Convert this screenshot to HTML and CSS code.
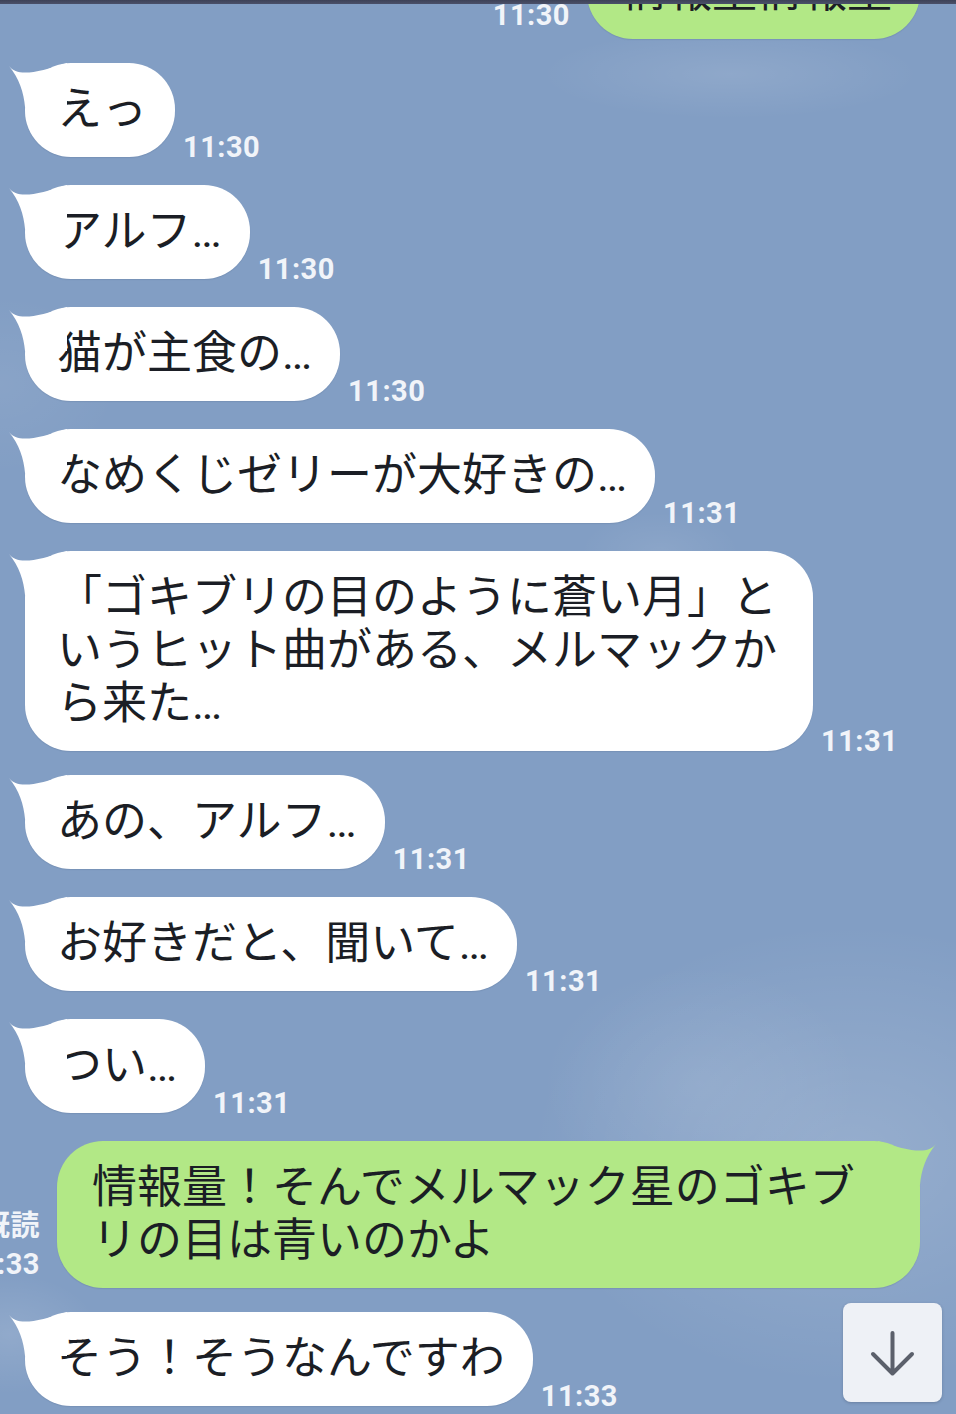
FILE: index.html
```html
<!DOCTYPE html>
<html lang="ja">
<head>
<meta charset="utf-8">
<title>トーク</title>
<link rel="stylesheet" href="styles.css">
</head>
<body>
<div class="phone">
  <div class="topbar"></div>
  <div class="chat">
    <ul class="messages">
      <li class="row sent">
        <div class="meta"><span>既読</span><span>11:30</span></div>
        <div class="bubble"><svg class="tail" viewBox="0 0 60 44" width="60" height="44"><path d="M2 3 C10 14 30 10 60 0 L60 44 L18 44 C17 30 12 15 2 3 Z"/></svg>情報量情報量</div>
      </li>
      <li class="row recv gap-sm">
        <div class="bubble"><svg class="tail" viewBox="0 0 60 44" width="60" height="44"><path d="M2 3 C10 14 30 10 60 0 L60 44 L18 44 C17 30 12 15 2 3 Z"/></svg>えっ</div>
        <span class="time">11:30</span>
      </li>
      <li class="row recv">
        <div class="bubble"><svg class="tail" viewBox="0 0 60 44" width="60" height="44"><path d="M2 3 C10 14 30 10 60 0 L60 44 L18 44 C17 30 12 15 2 3 Z"/></svg>アルフ…</div>
        <span class="time">11:30</span>
      </li>
      <li class="row recv">
        <div class="bubble"><svg class="tail" viewBox="0 0 60 44" width="60" height="44"><path d="M2 3 C10 14 30 10 60 0 L60 44 L18 44 C17 30 12 15 2 3 Z"/></svg>猫が主食の…</div>
        <span class="time">11:30</span>
      </li>
      <li class="row recv">
        <div class="bubble"><svg class="tail" viewBox="0 0 60 44" width="60" height="44"><path d="M2 3 C10 14 30 10 60 0 L60 44 L18 44 C17 30 12 15 2 3 Z"/></svg>なめくじゼリーが大好きの…</div>
        <span class="time">11:31</span>
      </li>
      <li class="row recv">
        <div class="bubble"><svg class="tail" viewBox="0 0 60 44" width="60" height="44"><path d="M2 3 C10 14 30 10 60 0 L60 44 L18 44 C17 30 12 15 2 3 Z"/></svg>「ゴキブリの目のように蒼い月」というヒット曲がある、メルマックから来た…</div>
        <span class="time">11:31</span>
      </li>
      <li class="row recv gap-sm">
        <div class="bubble"><svg class="tail" viewBox="0 0 60 44" width="60" height="44"><path d="M2 3 C10 14 30 10 60 0 L60 44 L18 44 C17 30 12 15 2 3 Z"/></svg>あの、アルフ…</div>
        <span class="time">11:31</span>
      </li>
      <li class="row recv">
        <div class="bubble"><svg class="tail" viewBox="0 0 60 44" width="60" height="44"><path d="M2 3 C10 14 30 10 60 0 L60 44 L18 44 C17 30 12 15 2 3 Z"/></svg>お好きだと、聞いて…</div>
        <span class="time">11:31</span>
      </li>
      <li class="row recv">
        <div class="bubble"><svg class="tail" viewBox="0 0 60 44" width="60" height="44"><path d="M2 3 C10 14 30 10 60 0 L60 44 L18 44 C17 30 12 15 2 3 Z"/></svg>つい…</div>
        <span class="time">11:31</span>
      </li>
      <li class="row sent">
        <div class="meta"><span>既読</span><span>11:33</span></div>
        <div class="bubble"><svg class="tail" viewBox="0 0 60 44" width="60" height="44"><path d="M2 3 C10 14 30 10 60 0 L60 44 L18 44 C17 30 12 15 2 3 Z"/></svg>情報量！そんでメルマック星のゴキブリの目は青いのかよ</div>
      </li>
      <li class="row recv gap-sm">
        <div class="bubble"><svg class="tail" viewBox="0 0 60 44" width="60" height="44"><path d="M2 3 C10 14 30 10 60 0 L60 44 L18 44 C17 30 12 15 2 3 Z"/></svg>そう！そうなんですわ</div>
        <span class="time">11:33</span>
      </li>
    </ul>
    <button class="scroll-down" type="button" aria-label="最新のメッセージへ">
      <svg viewBox="0 0 99 99" width="99" height="99"><path d="M49.5 30 V70 M30 51 L49.5 70.5 L69 51" fill="none" stroke="#5b606b" stroke-width="4" stroke-linecap="round" stroke-linejoin="round"/></svg>
    </button>
  </div>
</div>
</body>
</html>
```

FILE: styles.css
```css
html, body {
  margin: 0;
  padding: 0;
}

body {
  width: 956px;
  height: 1414px;
  overflow: hidden;
  background: #829ec4;
  font-family: "Roboto", "Noto Sans CJK JP", sans-serif;
}

.phone {
  display: flex;
  flex-direction: column;
  height: 1414px;
}

.topbar {
  height: 4px;
  flex-shrink: 0;
  background: linear-gradient(#3d4257, #4a5069);
}

.chat {
  position: relative;
  flex: 1;
  overflow: hidden;
  background:
    radial-gradient(ellipse 190px 45px at 730px 70px, rgba(255,255,255,0.10), rgba(255,255,255,0) 100%),
    radial-gradient(ellipse 320px 230px at 850px 1150px, rgba(255,255,255,0.16), rgba(255,255,255,0) 100%),
    radial-gradient(ellipse 160px 120px at 700px 1080px, rgba(255,255,255,0.08), rgba(255,255,255,0) 100%),
    radial-gradient(ellipse 90px 60px at 10px 1330px, rgba(255,255,255,0.12), rgba(255,255,255,0) 100%),
    radial-gradient(ellipse 120px 90px at 0px 380px, rgba(255,255,255,0.06), rgba(255,255,255,0) 100%),
    radial-gradient(ellipse 80px 40px at 660px 548px, rgba(255,255,255,0.08), rgba(255,255,255,0) 100%),
    #829ec4;
}

.messages {
  list-style: none;
  margin: -59px 0 0 0;
  padding: 0;
  display: flex;
  flex-direction: column;
}

.row {
  display: flex;
  align-items: flex-end;
  margin-top: 28px;
}

.row:first-child {
  margin-top: 0;
}

.row.gap-sm {
  margin-top: 24px;
}

.bubble {
  position: relative;
  flex-shrink: 0;
  box-sizing: border-box;
  font-size: 45px;
  line-height: 53px;
  color: #1b1e25;
  border-radius: 46px;
  padding: 20px 28px 21px 32px;
  word-break: break-all;
  line-break: strict;
}

.tail {
  position: absolute;
  top: 0;
  left: -18px;
  display: block;
}

.recv {
  padding-left: 25px;
}

.recv .bubble {
  background: #ffffff;
  max-width: 788px;
  box-shadow: 0 1px 1px rgba(40, 60, 90, 0.12);
}

.recv .tail path {
  fill: #ffffff;
}

.time {
  flex-shrink: 0;
  margin-left: 8px;
  margin-bottom: -4px;
  font-family: "Roboto", sans-serif;
  font-weight: 700;
  font-size: 29px;
  line-height: 28px;
  letter-spacing: 0.5px;
  color: #f1f4f9;
  white-space: nowrap;
}

.sent {
  justify-content: flex-end;
  padding-right: 36px;
}

.sent .bubble {
  background: #b2e886;
  max-width: 863px;
  padding: 20px 28px 21px 35px;
  box-shadow: 0 1px 1px rgba(40, 60, 90, 0.12);
}

.sent .tail {
  left: auto;
  right: -18px;
  transform: scaleX(-1);
}

.sent .tail path {
  fill: #b2e886;
}

.meta {
  flex-shrink: 0;
  display: flex;
  flex-direction: column;
  align-items: flex-end;
  margin-right: 17px;
  margin-bottom: 5px;
  font-family: "Roboto", "Noto Sans CJK JP", sans-serif;
  font-weight: 700;
  font-size: 29px;
  line-height: 38px;
  letter-spacing: 0.5px;
  color: #f1f4f9;
  white-space: nowrap;
}

.scroll-down {
  position: absolute;
  right: 14px;
  bottom: 12px;
  width: 99px;
  height: 99px;
  padding: 0;
  border: none;
  border-radius: 8px;
  background: #eef1f6;
  box-shadow: 0 1px 3px rgba(30, 40, 60, 0.25);
}

.scroll-down svg {
  display: block;
}
```
